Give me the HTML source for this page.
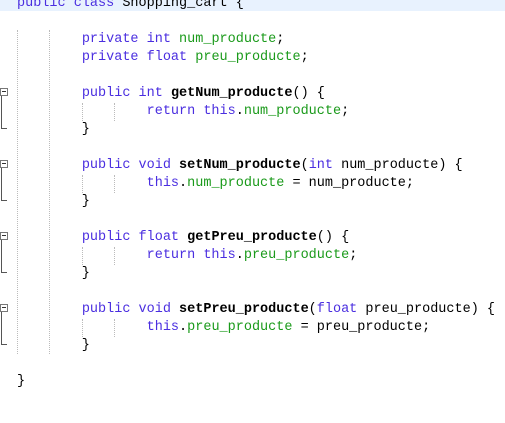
<html><head><style>
body{margin:0;width:505px;height:423px;background:#fff;overflow:hidden;position:relative}
.l{position:absolute;left:17px;white-space:pre;font-family:"Courier New","Nimbus Mono PS","FreeMono","Liberation Mono",monospace;font-size:13.5px;line-height:18px;height:18px;color:#000}
.k{color:#4a2ee0}.f{color:#1a9a1a}.b{font-weight:bold}
.g{position:absolute;border-left:1px dotted #bbb;width:0}
.fb{position:absolute;left:0;width:6px;height:6px;border:1px solid #777;background:#fff}
.fb:after{content:"";position:absolute;left:1px;top:2px;width:4px;height:1px;background:#333}
.fl{position:absolute;left:1px;width:5px;border-left:1px solid #555;border-bottom:1px solid #555}
</style></head><body>
<div style="position:absolute;left:0;top:0;width:505px;height:11px;background:#e8f2fe"></div>
<div class="g" style="left:17px;top:30px;height:324px"></div>
<div class="g" style="left:49px;top:30px;height:324px"></div>
<div class="g" style="left:82px;top:103px;height:18px"></div>
<div class="g" style="left:114px;top:103px;height:18px"></div>
<div class="g" style="left:82px;top:175px;height:18px"></div>
<div class="g" style="left:114px;top:175px;height:18px"></div>
<div class="g" style="left:82px;top:247px;height:18px"></div>
<div class="g" style="left:114px;top:247px;height:18px"></div>
<div class="g" style="left:82px;top:319px;height:18px"></div>
<div class="g" style="left:114px;top:319px;height:18px"></div>
<div class="fl" style="top:96px;height:32px"></div><div class="fb" style="top:88px"></div>
<div class="fl" style="top:168px;height:32px"></div><div class="fb" style="top:160px"></div>
<div class="fl" style="top:240px;height:32px"></div><div class="fb" style="top:232px"></div>
<div class="fl" style="top:312px;height:32px"></div><div class="fb" style="top:304px"></div>
<div class="l" style="top:-5px"><span class="k">public class</span> Shopping_cart {</div>
<div class="l" style="top:31px">        <span class="k">private int</span> <span class="f">num_producte</span>;</div>
<div class="l" style="top:49px">        <span class="k">private float</span> <span class="f">preu_producte</span>;</div>
<div class="l" style="top:85px">        <span class="k">public int</span> <span class="b">getNum_producte</span>() {</div>
<div class="l" style="top:103px">                <span class="k">return this</span>.<span class="f">num_producte</span>;</div>
<div class="l" style="top:121px">        }</div>
<div class="l" style="top:157px">        <span class="k">public void</span> <span class="b">setNum_producte</span>(<span class="k">int</span> num_producte) {</div>
<div class="l" style="top:175px">                <span class="k">this</span>.<span class="f">num_producte</span> = num_producte;</div>
<div class="l" style="top:193px">        }</div>
<div class="l" style="top:229px">        <span class="k">public float</span> <span class="b">getPreu_producte</span>() {</div>
<div class="l" style="top:247px">                <span class="k">return this</span>.<span class="f">preu_producte</span>;</div>
<div class="l" style="top:265px">        }</div>
<div class="l" style="top:301px">        <span class="k">public void</span> <span class="b">setPreu_producte</span>(<span class="k">float</span> preu_producte) {</div>
<div class="l" style="top:319px">                <span class="k">this</span>.<span class="f">preu_producte</span> = preu_producte;</div>
<div class="l" style="top:337px">        }</div>
<div class="l" style="top:373px">}</div>
</body></html>
